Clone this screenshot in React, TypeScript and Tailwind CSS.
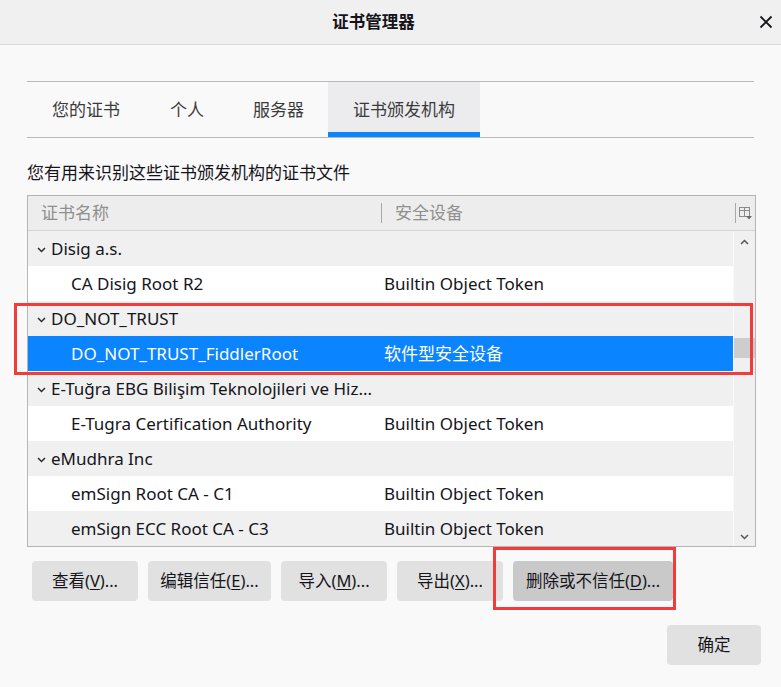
import React from 'react'

type Row = {
  name: string
  device?: string
  group?: boolean
  selected?: boolean
}

const rows: Row[] = [
  { name: 'Disig a.s.', group: true },
  { name: 'CA Disig Root R2', device: 'Builtin Object Token' },
  { name: 'DO_NOT_TRUST', group: true },
  { name: 'DO_NOT_TRUST_FiddlerRoot', device: '软件型安全设备', selected: true },
  { name: 'E-Tuğra EBG Bilişim Teknolojileri ve Hiz...', group: true },
  { name: 'E-Tugra Certification Authority', device: 'Builtin Object Token' },
  { name: 'eMudhra Inc', group: true },
  { name: 'emSign Root CA - C1', device: 'Builtin Object Token' },
  { name: 'emSign ECC Root CA - C3', device: 'Builtin Object Token' },
]

const tabs = ['您的证书', '个人', '服务器', '证书颁发机构']

function Chevron({ up = false, className = '' }: { up?: boolean; className?: string }) {
  return (
    <svg width="9" height="6" viewBox="0 0 9 6" className={className}>
      <path
        d={up ? 'M1 5 L4.5 1.5 L8 5' : 'M1 1 L4.5 4.5 L8 1'}
        fill="none"
        stroke="currentColor"
        strokeWidth="1.5"
      />
    </svg>
  )
}

function Accel({ label, k, rest }: { label: string; k: string; rest: string }) {
  return (
    <>
      {label}(<span className="underline underline-offset-2">{k}</span>){rest}
    </>
  )
}

export default function App() {
  return (
    <div
      className="relative w-[781px] h-[687px] bg-[#f9f9f9] text-[#15141a] flex flex-col overflow-hidden"
      style={{ fontFamily: '"Noto Sans", "Noto Sans CJK SC", sans-serif' }}
    >
      {/* Title bar */}
      <div className="h-[45px] shrink-0 bg-[#f0f0f0] border-b border-[#d9d9d9] flex items-center">
        <div className="flex-1 flex justify-center pl-[5px] pr-[17px]">
          <span className="text-[16.5px] font-bold">证书管理器</span>
        </div>
        <svg width="14" height="14" viewBox="0 0 14 14" className="mr-[8px] mb-[1px]">
          <path d="M1.5 1.5 L12.5 12.5 M12.5 1.5 L1.5 12.5" stroke="#15141a" strokeWidth="1.8" />
        </svg>
      </div>

      <div className="px-[27px] flex flex-col">
        {/* Tabs */}
        <div className="mt-[36px] w-[727px] h-[57px] border-y border-[#b8b8b8] flex">
          {tabs.map((t, i) => {
            const active = i === tabs.length - 1
            return (
              <div
                key={t}
                className={
                  active
                    ? 'relative px-[25px] flex items-center text-[17px] text-[#3b3b3b] bg-[#ececee]'
                    : i === 2
                      ? 'px-[24px] flex items-center text-[17px] text-[#3b3b3b]'
                      : 'px-[25px] flex items-center text-[17px] text-[#3b3b3b]'
                }
              >
                {t}
                {active && <div className="absolute left-0 right-0 bottom-0 h-[5px] bg-[#0a84ff]" />}
              </div>
            )
          })}
        </div>

        {/* Description */}
        <div className="mt-[23px] text-[17px] leading-[24px]">您有用来识别这些证书颁发机构的证书文件</div>

        {/* Tree table */}
        <div className="mt-[10px] w-[729px] border border-[#b5b5b5] bg-[#f0f0f0] flex flex-col">
          <div className="h-[35px] flex items-center bg-[#ededed] border-b border-[#d4d4d4] text-[17px] text-[#8f8f8f]">
            <div className="w-[353px] pl-[13px] flex items-center">证书名称</div>
            <div className="w-px h-[20px] bg-[#a8a8a8]" />
            <div className="w-[353px] pl-[13px]">安全设备</div>
            <div className="w-px h-[20px] bg-[#a8a8a8]" />
            <div className="flex-1 flex justify-center">
              <svg width="13" height="13" viewBox="0 0 13 13">
                <rect x="0.5" y="0.5" width="10" height="9" fill="none" stroke="#8a8a8a" />
                <path d="M0.5 3.5 H10.5 M5.5 0.5 V9.5" stroke="#8a8a8a" />
                <path d="M7 9 H13 L10 12.5 Z" fill="#6b6b6b" />
              </svg>
            </div>
          </div>

          <div className="flex">
            <div className="w-[705px] flex flex-col">
              {rows.map((r, i) => (
                <div
                  key={r.name}
                  className={
                    r.selected
                      ? 'h-[35px] flex items-center text-[17px] bg-[#0a84ff] text-white'
                      : i % 2 === 0
                        ? 'h-[35px] flex items-center text-[17px] bg-[#f0f0f0]'
                        : 'h-[35px] flex items-center text-[17px] bg-white'
                  }
                >
                  {r.group ? (
                    <div className="flex items-center pl-[9px] whitespace-nowrap">
                      <Chevron className="text-[#2b2b2b] mr-[5px] mt-[2px]" />
                      {r.name}
                    </div>
                  ) : (
                    <>
                      <div className="w-[356px] pl-[43px] whitespace-nowrap">{r.name}</div>
                      <div className="whitespace-nowrap">{r.device}</div>
                    </>
                  )}
                </div>
              ))}
            </div>
            <div className="flex-1 border-l border-[#f9f9f9] bg-[#f0f0f0] flex flex-col items-center pt-[8px] pb-[6px] text-[#555]">
              <Chevron up />
              <div className="mt-[93px] w-full h-[20px] bg-[#cdcdcd]" />
              <div className="flex-1" />
              <Chevron />
            </div>
          </div>
        </div>

        {/* Buttons */}
        <div className="mt-[14px] pl-[5px] flex gap-[10px] text-[16.5px]">
          <button className="w-[106px] h-[40px] rounded-[4px] bg-[#e1e1e1]">
            <Accel label="查看" k="V" rest="..." />
          </button>
          <button className="w-[123px] h-[40px] rounded-[4px] bg-[#e1e1e1]">
            <Accel label="编辑信任" k="E" rest="..." />
          </button>
          <button className="w-[106px] h-[40px] rounded-[4px] bg-[#e1e1e1]">
            <Accel label="导入" k="M" rest="..." />
          </button>
          <button className="w-[106px] h-[40px] rounded-[4px] bg-[#e1e1e1]">
            <Accel label="导出" k="X" rest="..." />
          </button>
          <button className="w-[160px] h-[40px] rounded-[4px] bg-[#c9c9c9]">
            <Accel label="删除或不信任" k="D" rest="..." />
          </button>
        </div>

        <div className="mt-[24px] flex justify-end">
          <button className="w-[94px] h-[40px] mr-[-7px] rounded-[4px] bg-[#e1e1e1] text-[16.5px]">确定</button>
        </div>
      </div>

      {/* Red annotation boxes */}
      <div className="absolute left-[14px] top-[303px] w-[739px] h-[72px] border-[3px] border-[#f23b3b]" />
      <div className="absolute left-[493px] top-[547px] w-[183px] h-[63px] border-[3px] border-[#f23b3b]" />
    </div>
  )
}
